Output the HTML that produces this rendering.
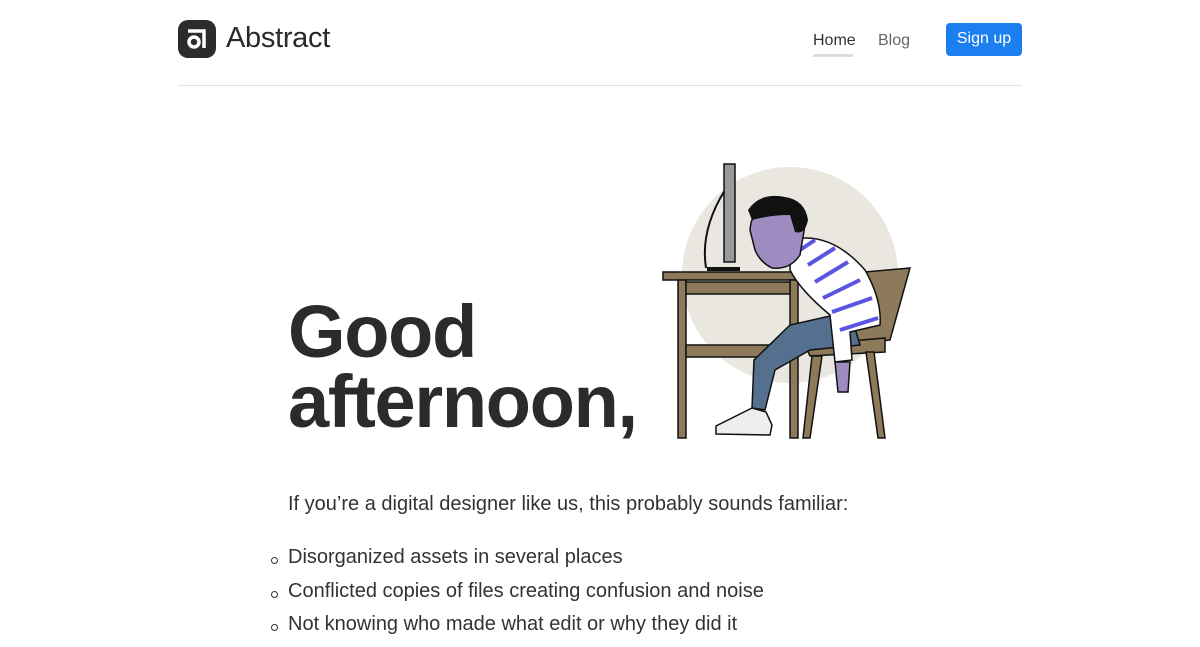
<!DOCTYPE html>
<html><head><meta charset="utf-8"><style>
*{margin:0;padding:0;box-sizing:border-box}
body{width:1200px;height:633px;overflow:hidden;background:#fff;font-family:"Liberation Sans",sans-serif;color:#2b2b2b;position:relative}
.abs{position:absolute}
.logo{left:178px;top:20px;width:38px;height:38px;background:#2c2c2c;border-radius:10px}
.brand{left:226px;top:22px;font-size:29px;font-weight:500;color:#2a2a2a;letter-spacing:-0.3px}
.nav{font-size:16px;color:#333}
.hr{left:178px;top:85px;width:844px;height:1px;background:#e2e2e2}
.btn{left:946px;top:23px;width:76px;height:33px;background:#1b7ff0;border-radius:4px;color:#fff;font-size:16px;text-align:center;line-height:32px}
h1{position:absolute;left:288px;top:297px;font-size:74px;line-height:70px;font-weight:bold;letter-spacing:-1.3px;color:#2b2b2b}
.p{left:288px;top:493px;font-size:20px;color:#333}
ul{position:absolute;left:288px;top:546px;list-style:none;font-size:20px;color:#333}
li{height:33.5px;position:relative}
li:before{content:"";position:absolute;left:-17px;top:11px;width:5px;height:5px;border:1.3px solid #333;border-radius:50%}
</style></head><body>
<div class="abs logo"><svg width="38" height="38" viewBox="0 0 38 38"><path d="M10 11h16v17" fill="none" stroke="#fff" stroke-width="3.5"/><circle cx="16" cy="22" r="5" fill="none" stroke="#fff" stroke-width="3.5"/></svg></div>
<div class="abs brand">Abstract</div>
<div class="abs nav" style="left:813px;top:32px">Home</div>
<div class="abs" style="left:813px;top:54px;width:40px;height:3px;background:#ddd"></div>
<div class="abs nav" style="left:878px;top:32px;color:#666">Blog</div>
<div class="abs btn">Sign up</div>
<div class="abs hr"></div>
<svg class="abs" style="left:650px;top:150px" width="280" height="300" viewBox="650 150 280 300">
<circle cx="790" cy="275" r="108" fill="#e9e7e0"/>
<path d="M725 190 Q700 230 706 268" fill="none" stroke="#111" stroke-width="2"/>
<rect x="724" y="164" width="11" height="98" fill="#9a9a9a" stroke="#111" stroke-width="1.5"/>
<rect x="707" y="267" width="33" height="4" fill="#111"/>
<g fill="#8c7a5a" stroke="#111" stroke-width="1.5">
<rect x="663" y="272" width="138" height="8"/>
<rect x="678" y="280" width="8" height="158"/>
<rect x="790" y="280" width="8" height="158"/>
<rect x="686" y="282" width="104" height="12"/>
<rect x="686" y="345" width="104" height="12"/>
<path d="M865 272 L910 268 L890 340 L850 345Z"/>
<path d="M805 345 L885 338 L885 352 L810 356Z"/>
<path d="M812 356 L803 438 L810 438 L822 356Z"/>
<path d="M866 352 L878 438 L885 438 L874 352Z"/>
</g>
<path d="M830 316 L850 312 L860 345 L810 350 L775 370 L765 410 L752 408 L754 360 L790 325Z" fill="#55708e" stroke="#111" stroke-width="1.5"/>
<path d="M790 240 Q830 230 865 270 Q882 300 880 325 L850 332 L852 360 L835 362 L830 315 Q800 290 790 270Z" fill="#fff" stroke="#111" stroke-width="1.5"/>
<g stroke="#5a55e0" stroke-width="4"><path d="M800 250 L815 240"/><path d="M808 265 L835 248"/><path d="M815 282 L848 262"/><path d="M823 298 L860 280"/><path d="M832 312 L872 298"/><path d="M840 330 L878 318"/></g>
<path d="M750 230 Q752 205 775 198 Q800 200 805 225 L800 255 Q790 270 772 268 Q760 262 755 250Z" fill="#9e8cc0" stroke="#111" stroke-width="1.5"/>
<path d="M748 210 Q760 192 785 197 Q805 200 808 220 Q805 235 795 232 L790 215 Q770 215 752 220Z" fill="#111"/>
<path d="M752 408 L766 412 L772 425 L770 435 L716 434 L716 426Z" fill="#eee" stroke="#111" stroke-width="1.5"/>
<path d="M835 362 L850 362 L848 392 L838 392Z" fill="#9e8cc0" stroke="#111" stroke-width="1.5"/>
</svg>
<h1>Good<br>afternoon,</h1>
<div class="abs p">If you’re a digital designer like us, this probably sounds familiar:</div>
<ul><li>Disorganized assets in several places</li><li>Conflicted copies of files creating confusion and noise</li><li>Not knowing who made what edit or why they did it</li></ul>
</body></html>
